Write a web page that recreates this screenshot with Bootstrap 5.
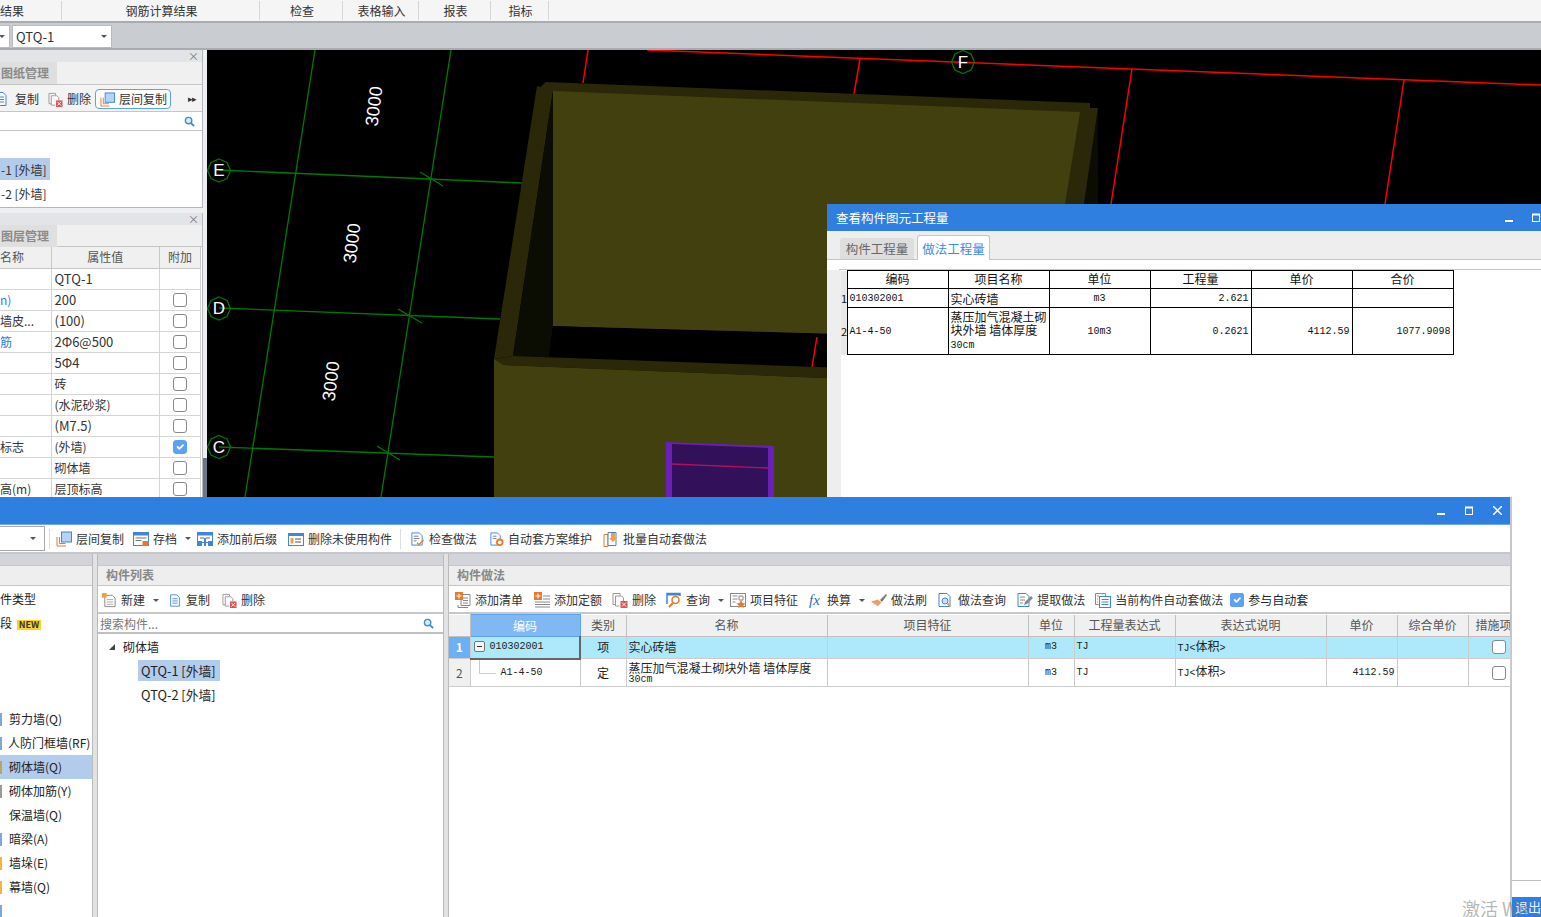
<!DOCTYPE html>
<html lang="zh-CN">
<head>
<meta charset="UTF-8">
<title>查看构件图元工程量</title>
<link href="https://cdn.jsdelivr.net/npm/bootstrap@5.3.0/dist/css/bootstrap.min.css" rel="stylesheet">
<style>
html, body { height: 917px; overflow: hidden; }
body { position: relative; background: #fff; color: #333; font: 12px/16px "Noto Sans CJK SC", "Liberation Sans", sans-serif; }
.ribbon-tabs { height: 23px; background: #f5f5f5; border-bottom: 2px solid #a8abaf; }
.ribbon-tabs > div { height: 19px; margin-top: 1px; padding-left: 2px; line-height: 19px; text-align: center; border-right: 1px solid #d5d5d5; }
.rt-1 { width: 62px; padding-left: 0 !important; text-align: left !important; }
.rt-2 { width: 198px; }
.rt-3 { width: 83px; }
.rt-4 { width: 76px; }
.rt-5 { width: 72px; }
.rt-6 { width: 58px; }
.combo-row { height: 27px; background: #c9ccd0; border-bottom: 2px solid #a8abaf; gap: 2px; padding-top: 2px; }
.combo { height: 23px; background: #fff; border: 1px solid #b9bbbf; font-size: 13px; line-height: 21px; padding-left: 3px; }
.combo-a { width: 10px; border-left: 0; }
.combo-b { width: 100px; }
.caret-dn { display: block; width: 0; height: 0; border: 3px solid transparent; border-top: 3px solid #555; border-bottom: 0; flex: none; }
.main-area { height: 447px; }
.left-col { width: 207px; background: #eeeff1; position: relative; }
.dock { width: 203px; border-right: 1px solid #b5b7ba; background: #fff; }
.dock-a { height: 158px; border-bottom: 1px solid #b5b7ba; }
.dock-b { height: 284px; margin-top: 5px; }
.dock-band { height: 12px; background: #e3e4e7; text-align: right; font-size: 11px; line-height: 12px; padding-right: 3px; color: #777; }
.dock-tabs { height: 23px; background: #f0f0f0; border-bottom: 1px solid #c5c5c5; }
.dock-b .dock-tabs { height: 22px; }
.dock-tab { width: 57px; background: #dfdfdf; color: #8a8a8a; font-weight: 700; line-height: 22px; padding-left: 1px; }
.dock-bar { height: 27px; background: #f3f3f3; border-bottom: 1px solid #c5c5c5; padding-top: 2px; }
.dock-search { height: 19px; border-bottom: 1px solid #c5c5c5; padding-right: 7px; }
.dock-item { height: 22px; line-height: 24px; padding-left: 1px; width: 50px; white-space: nowrap; margin-bottom: 2px; }
.dock-list { padding-top: 27px; }
.is-sel { background: #b3ccec; }
.scroll-stub { position: absolute; right: 0; top: 408px; bottom: 0; width: 4px; background: #6b7785; }
.tool { display: inline-flex; align-items: center; gap: 4px; height: 20px; white-space: nowrap; flex: none; }
.tool svg { flex: none; }
.tool-on { border: 1px solid #5ba2f0; border-radius: 4px; background: #fff; padding: 0 3px 0 4px; margin-left: 4px; }
.tool-txt { margin-left: 6px; }
.tool-end { margin-left: auto; margin-right: 6px; font-size: 9px; letter-spacing: -1px; }
.prop-table { table-layout: fixed; width: 201px; margin: 0; }
.prop-table td, .prop-table th { height: 21px; padding: 0 0 0 3px; border: 1px solid #d5d5d5; border-width: 0 1px 1px 0; font-size: 12px; font-weight: 400; line-height: 20px; vertical-align: middle; white-space: nowrap; overflow: hidden; background: #fff; color: #333; box-shadow: none; }
.prop-table th { background: #f0f0f0; text-align: center; color: #555; padding: 0; border-color: #c8c8c8; }
.prop-table td.lat { font-size: 13px; }
.pc-1 { width: 51px; }
.pc-3 { width: 41px; }
.prop-table td.prop-link { color: #2d7ee0; }
.chk { width: 14px; height: 14px; margin: 0 0 0 10px !important; border: 1px solid #888; border-radius: 3px; display: block; float: none; }
.chk:checked { background-color: #5ba2f5; border-color: #5ba2f5; }
.canvas-wrap { flex: 1; background: #000; overflow: hidden; }
.canvas-wrap svg { display: block; }
.cad-txt { font-family: "Liberation Sans", sans-serif; fill: #fff; }
.win-title { background: #2e7fe0; color: #fff; flex: none; }
.win-qty { position: absolute; left: 827px; top: 204px; width: 741px; height: 713px; background: #fff; z-index: 2; }
.win-qty .win-title { height: 27px; padding-left: 9px; font-size: 12.5px; line-height: 27px; }
.win-btns { margin-left: auto; gap: 18px; }
.win-btns svg { display: block; }
.qty-tabs { height: 29px; background: #eee; padding-left: 13px; border-bottom: 1px solid #c5c5c5; align-items: flex-end; flex: none; }
.qty-tab { height: 21px; width: 74px; background: #dedede; color: #666; text-align: center; font-size: 12.5px; line-height: 21px; border-radius: 3px 3px 0 0; }
.qty-tab-on { height: 25px; width: 73px; margin-left: 3px; margin-bottom: -1px; background: #fff; color: #3b8be8; border: 1px solid #c5c5c5; border-bottom: 0; line-height: 25px; }
.qty-strip { height: 10px; background: #fff; border-bottom: 1px solid #c5c5c5; margin-left: 12px; flex: none; }
.qty-body { flex: 1; border-left: 14px solid #eee; background: #fff; }
.qty-table { table-layout: fixed; width: 612px; margin: 0; border-collapse: collapse; }
.qty-table td, .qty-table th { padding: 0 2px; border: 1px solid #000; font-size: 12px; font-weight: 400; line-height: 13px; vertical-align: middle; color: #111; background: #fff; box-shadow: none; overflow: hidden; }
.qty-table th { height: 18px; padding-bottom: 2px; text-align: center; line-height: 15px; }
.qty-table tbody tr:first-child td { height: 19px; }
.qty-table tbody tr:last-child td { height: 47px; }
.qty-table td.rh, .qty-table th.rh { padding: 0; background: #e8e8e8; border: 0; border-right: 1px solid #000; font-size: 11px; }
.qt-1 { width: 6px; }
.qc { width: 101px; }
.mono, .qty-table td.mono, .grid-table td.mono { font-family: "Liberation Mono", monospace; font-size: 10px; }
.mono .zh { font-family: "Noto Sans CJK SC", sans-serif; font-size: 12px; }
.qty-foot { height: 17px; border-top: 1px solid #bdbdbd; flex: none; }
.qty-exit { height: 20px; margin-left: 685px; background: #2e7fe0; color: #eaf2fc; padding-left: 3px; line-height: 20px; font-size: 13px; flex: none; }
.watermark { position: absolute; left: 1462px; top: 896px; z-index: 5; color: rgba(120,120,120,.55); font-size: 18px; line-height: 24px; white-space: nowrap; }
.win-comp { position: absolute; left: 0; top: 497px; width: 1512px; height: 420px; background: #d2d4d9; border-right: 2px solid #c5c7cb; z-index: 3; }
.win-comp .win-title { height: 28px; border-bottom: 1px solid #6ea8ea; }
.win-comp .win-btns { gap: 19px; padding-right: 8px; }
.comp-bar { height: 29px; background: #fff; border-bottom: 2px solid #c5c7cb; flex: none; }
.comp-combo { width: 45px; height: 25px; border: 1px solid #aaa; border-left: 0; padding-right: 8px; }
.bar-sep { width: 1px; height: 20px; background: #ddd; flex: none; }
.comp-panes { flex: 1; min-height: 0; }
.pane { background: #fff; }
.pane-types { width: 92px; }
.pane-list { width: 345px; }
.pane-grid { flex: 1; min-width: 0; }
.pane-head { height: 32px; padding-top: 11px; background: #d2d4d9; flex: none; }
.pane-head div { height: 21px; background: #eee; border-top: 1px solid #c5c7cb; border-bottom: 1px solid #c5c7cb; color: #888; font-weight: 700; line-height: 18px; padding-left: 8px; }
.split { width: 6px; background: #e2e2e2; border-left: 1px solid #bbb; border-right: 1px solid #bbb; flex: none; }
.type-list { padding-top: 1px; }
.type-row { height: 24px; line-height: 24px; padding-left: 9px; white-space: nowrap; color: #222; position: relative; }
.type-sel { background: #b3ccec; }
.new-tag { background: #ffd21f; color: #333; font-size: 9px; line-height: 10px; font-weight: 700; padding: 0 2px; margin-left: 2px; display: inline-block; }
.type-edge { position: absolute; left: 0; top: 6px; width: 2px; height: 13px; background: #7aa7dc; }
.edge-gray { background: #999; }
.edge-yellow { background: #f3b63a; }
.edge-beige { background: #b8a45e; }
.pane-bar { height: 28px; border-bottom: 2px solid #c5c7cb; padding-top: 2px; flex: none; }
.pane-search { height: 20px; padding: 1px 9px 0 2px; border-bottom: 2px solid #c0c0c0; color: #777; line-height: 17px; flex: none; }
.tree-a { padding: 2px 0 0 11px; line-height: 22px; color: #222; }
.tree-tri { width: 0; height: 0; border-style: solid; border-width: 0 0 6px 6px; border-color: transparent transparent #444 transparent; flex: none; }
.tree-b { margin: 3px 0 0 40px; width: 82px; height: 21px; line-height: 21px; padding-left: 3px; color: #222; white-space: nowrap; font-size: 12.8px; }
.tree-a + .tree-b { margin-top: 2px; }
.grid-table { table-layout: fixed; width: 1061px; margin: 0; border-collapse: collapse; }
.grid-table td, .grid-table th { padding: 0 2px; border: 1px solid #ccc; border-width: 0 1px 1px 0; font-size: 12px; font-weight: 400; line-height: 12px; vertical-align: middle; background: #fff; color: #222; box-shadow: none; overflow: hidden; white-space: nowrap; position: relative; }
.grid-table th { height: 22px; background: #f0f0f0; color: #555; text-align: center; border-color: #c0c0c0; }
.grid-table th.head-on { background: #7fb8f5; color: #fff; border: 1px solid #5ba2f0; }
.grid-table th.head-cut { text-align: left; padding-left: 7px; }
.grid-table td.rh { background: #f0f0f0; text-align: center; color: #555; }
.grid-table .row-a td { height: 22px; padding-bottom: 1px; background: #ade8fb; }
.grid-table .row-a td.rh { background: #6bb0f5; color: #fff; font-weight: 700; }
.grid-table .row-a td.cell-on { border-right: 2px solid #666; border-bottom: 2px solid #666; }
.grid-table .row-b td { height: 28px; }
.grid-table td.wrap { white-space: normal; line-height: 13px; }
.grid-table td.wrap .mono { display: block; line-height: 11px; }
.gc-1 { width: 21px; } .gc-2 { width: 110px; } .gc-3 { width: 46px; } .gc-4 { width: 201px; } .gc-5 { width: 201px; } .gc-6 { width: 46px; }
.gc-7 { width: 101px; } .gc-8 { width: 151px; } .gc-9 { width: 71px; } .gc-10 { width: 71px; } .gc-11 { width: 42px; }
.code-box { display: inline-flex; align-items: center; gap: 5px; margin-left: 1px; height: 12px; vertical-align: top; }
.minus-box { width: 11px; height: 11px; border: 1px solid #777; background: #f5f5f5; border-radius: 2px; position: relative; flex: none; }
.minus-box::after { content: ""; position: absolute; left: 2px; right: 2px; top: 4px; height: 1px; background: #333; }
.grid-table td.code-sub { padding-left: 30px; }
.code-sub::before { content: ""; position: absolute; left: 8px; top: 0; width: 17px; height: 14px; border-left: 1px solid #ccc; border-bottom: 1px solid #ccc; }
.grid-chk { width: 14px; height: 14px; margin: 0 0 0 21px !important; border: 1px solid #888; border-radius: 3px; display: block; }
.grid-head-chk, .grid-head-chk:checked { width: 14px; height: 14px; margin: 0 !important; flex: none; background-color: #5ba2f5; border-color: #5ba2f5; border-radius: 2px; }
.tb-a { margin-left: 6px; }
.tb-b { margin-left: 9px; }
.tb-c { margin-left: 6px; }
.tb-d { margin-left: 11px; }
.tb-s { margin-left: 8px; }
.tb-e { margin-left: 9px; }
.tb-f { margin-left: 12px; }
.tb-h { margin-left: 11px; }
.tb-g { margin-left: 9px; }
.tb-i { margin-left: 12px; }
.tg-start { margin-left: 6px; }
.tg { margin-right: 10px; }
.tg-m { margin-right: 11px; }
.tg-s { margin-right: 6px; }
.tg-c { margin-left: -3px; }
.fx-mark { width: 14px; font: italic 15px "Liberation Serif", serif; color: #2d6fb8; }
</style>
</head>
<body>

<svg width="0" height="0" class="position-absolute">
  <defs>
    <symbol id="i-floor" viewBox="0 0 16 16"><path d="M1 15V6M1 15h9M3.500 12.500V6M3.500 12.500h6" fill="none" stroke="#e8792b" stroke-width="1"/><rect x="5.500" y="1" width="10" height="10" fill="#b5d3f5" stroke="#3f86d8"/></symbol>
    <symbol id="i-copy" viewBox="0 0 16 16"><path d="M3 1.500h7l3 3v10H3z" fill="#fff" stroke="#3f86d8"/><path d="M5 6h6M5 8.500h6M5 11h6" stroke="#3f86d8"/></symbol>
    <symbol id="i-del" viewBox="0 0 16 16"><path d="M1 1.500h7v2M1 1.500v11h3" fill="none" stroke="#999"/><path d="M3.500 4h6l2 2v3M3.500 4v10h4" fill="#fff" stroke="#999"/><rect x="8.500" y="9" width="7" height="7" fill="#d9534f"/><path d="M10 10.500l4 4M14 10.500l-4 4" stroke="#fff"/></symbol>
    <symbol id="i-search" viewBox="0 0 12 12"><circle cx="5" cy="5" r="3.500" fill="#dbeaf7" stroke="#3b8ec9" stroke-width="1.500"/><path d="M7.500 7.500l3.500 3.500" stroke="#3b8ec9" stroke-width="2"/></symbol>
    <symbol id="i-save" viewBox="0 0 16 16"><rect x=".5" y="1.500" width="15" height="13" fill="#fff" stroke="#3f86d8"/><rect x=".5" y="1.500" width="15" height="3" fill="#3f86d8"/><path d="M2.500 7h11M2.500 9.500h6" stroke="#777"/><rect x="9.500" y="10" width="6" height="5" fill="#e8792b"/></symbol>
    <symbol id="i-fix" viewBox="0 0 16 16"><rect x=".5" y="1.500" width="15" height="10" fill="#fff" stroke="#3f86d8"/><rect x=".5" y="1.500" width="15" height="3" fill="#3f86d8"/><path d="M3 7h4M9 7h4" stroke="#666"/><rect x="0" y="10" width="5" height="5" fill="#3f86d8"/><rect x="11" y="10" width="5" height="5" fill="#3f86d8"/><rect x="7" y="7" width="2" height="8" fill="#3f86d8"/></symbol>
    <symbol id="i-unused" viewBox="0 0 16 16"><rect x=".5" y="2.500" width="15" height="12" fill="#fff" stroke="#3f86d8"/><rect x=".5" y="2.500" width="15" height="2.500" fill="#3f86d8"/><path d="M7 8h6M7 11h6" stroke="#555"/><rect x="2.500" y="7" width="3" height="5.500" fill="#f0a040"/></symbol>
    <symbol id="i-check" viewBox="0 0 16 16"><path d="M2 1.500h8l3 3v10H2z" fill="#fff" stroke="#3f86d8"/><path d="M4 5h5M4 7.500h6M4 10h3" stroke="#777"/><path d="M7.500 12l2 2 5-5" fill="none" stroke="#e8792b" stroke-width="1.500"/></symbol>
    <symbol id="i-auto" viewBox="0 0 16 16"><path d="M2 1.500h7l3 3v10H2z" fill="#fff" stroke="#3f86d8"/><path d="M4 5h4M4 7.500h4" stroke="#777"/><circle cx="11.500" cy="11.500" r="3" fill="#fff" stroke="#e8792b" stroke-width="2"/></symbol>
    <symbol id="i-batch" viewBox="0 0 16 16"><path d="M1 3.500h4v12H1z" fill="#fff" stroke="#e8792b"/><path d="M5 1.500h8v13H5z" fill="#fff" stroke="#3f86d8"/><path d="M8 2h4v5h2l-4 4-4-4h2z" fill="#f0a040"/></symbol>
    <symbol id="i-new" viewBox="0 0 16 16"><path d="M3 2.500h8l3 3v9H3z" fill="#fff" stroke="#888"/><path d="M5 7h7M5 9.500h7M5 12h7" stroke="#aaa"/><rect x="0" y="0" width="5" height="5" fill="#f0a040"/></symbol>
    <symbol id="i-addlist" viewBox="0 0 16 16"><path d="M6 2.500h9v11H6z" fill="#fff" stroke="#888"/><path d="M3 13v2.500h10" fill="none" stroke="#888"/><path d="M8 6h5M8 8.500h5M8 11h5" stroke="#888"/><rect x="0" y="0" width="8" height="8" fill="#e8792b"/><path d="M4 1.500v5M1.500 4h5" stroke="#fff"/></symbol>
    <symbol id="i-addquota" viewBox="0 0 16 16"><rect x="0" y="0" width="8" height="8" fill="#e8792b"/><path d="M4 1.500v5M1.500 4h5" stroke="#fff"/><path d="M9 4h7M9 7h7M1 10h15M1 12.500h15M1 15h15" stroke="#888"/></symbol>
    <symbol id="i-query" viewBox="0 0 16 16"><path d="M1 12V1.500h13V4" fill="none" stroke="#3f86d8" stroke-width="1.500"/><path d="M1 2.500h13" stroke="#3f86d8" stroke-width="2"/><circle cx="9.500" cy="8" r="3.500" fill="#fff" stroke="#e8792b" stroke-width="1.500"/><path d="M7 11l-4 4" stroke="#e8792b" stroke-width="2"/></symbol>
    <symbol id="i-feat" viewBox="0 0 16 16"><rect x=".5" y="1.500" width="15" height="13" fill="#fff" stroke="#888"/><path d="M2.500 4h5M2.500 7h5M2.500 10h3M9 4h4v4H9z" fill="none" stroke="#888"/><path d="M11 8l1.500 3 3 .5-2.200 2 .7 2.500-3-1.500-3 1.500.7-2.500-2.200-2 3-.5z" fill="#e8792b"/></symbol>
    <symbol id="i-brush" viewBox="0 0 16 16"><path d="M9 8L15 2l1 1-5 7z" fill="#777"/><path d="M10.500 10.500L7 7.500 0 9.500l2 1.500 1-.3-.5 1.500 2 .5.700-1-.2 1.800 2 .5z" fill="#e8a070"/></symbol>
    <symbol id="i-look" viewBox="0 0 16 16"><path d="M1 1.500h8l3 3v10H1z" fill="#fff" stroke="#3f86d8"/><circle cx="7" cy="9" r="3" fill="#cfe3f7" stroke="#3f86d8"/><path d="M9.500 11.500l3 3" stroke="#f0a040" stroke-width="2"/></symbol>
    <symbol id="i-pick" viewBox="0 0 16 16"><path d="M1 1.500h8l3 3v10H1z" fill="#fff" stroke="#3f86d8"/><path d="M3 5h5M3 8h5M3 11h3" stroke="#888"/><path d="M7 13l1-3 6-6 2 2-6 6z" fill="#888"/></symbol>
    <symbol id="i-current" viewBox="0 0 16 16"><path d="M.5 1.500h10v3M.5 1.500v11h3" fill="none" stroke="#888"/><path d="M2 4h2M2 7h1M2 10h1" stroke="#e8792b"/><rect x="4.500" y="4.500" width="11" height="11" fill="#fff" stroke="#3f86d8"/><path d="M6.500 7.500h7M6.500 10h7M6.500 12.500h7" stroke="#3f86d8"/></symbol>
  </defs>
</svg>

<div class="ribbon-tabs d-flex">
  <div class="rt-1">结果</div>
  <div class="rt-2">钢筋计算结果</div>
  <div class="rt-3">检查</div>
  <div class="rt-4">表格输入</div>
  <div class="rt-5">报表</div>
  <div class="rt-6">指标</div>
</div>
<div class="combo-row d-flex">
  <div class="combo combo-a d-flex align-items-center justify-content-end pe-1"><span class="caret-dn"></span></div>
  <div class="combo combo-b d-flex align-items-center justify-content-between pe-1"><span>QTQ-1</span><span class="caret-dn"></span></div>
</div>

<div class="main-area d-flex">
  <div class="left-col">
    <div class="dock dock-a d-flex flex-column">
      <div class="dock-band">×</div>
      <div class="dock-tabs"><div class="dock-tab">图纸管理</div></div>
      <div class="dock-bar d-flex align-items-center overflow-hidden">
        <span class="tool"><svg width="9" height="16"><use href="#i-copy" x="-7" width="16" height="16"/></svg></span>
        <span class="tool tool-txt"><span>复制</span></span>
        <span class="tool tb-g"><svg width="15" height="15"><use href="#i-del"/></svg><span>删除</span></span>
        <span class="tool tool-on"><svg width="15" height="15"><use href="#i-floor"/></svg><span>层间复制</span></span>
        <span class="tool-end">▸▸</span>
      </div>
      <div class="dock-search d-flex align-items-center justify-content-end"><svg width="11" height="11"><use href="#i-search"/></svg></div>
      <div class="dock-list">
        <div class="dock-item is-sel">-1 [外墙]</div>
        <div class="dock-item">-2 [外墙]</div>
      </div>
    </div>
    <div class="dock dock-b">
      <div class="dock-band">×</div>
      <div class="dock-tabs"><div class="dock-tab">图层管理</div></div>
      <table class="table prop-table">
        <colgroup><col class="pc-1"><col><col class="pc-3"></colgroup>
        <thead><tr><th class="text-start">名称</th><th>属性值</th><th>附加</th></tr></thead>
        <tbody>
          <tr><td></td><td class="lat">QTQ-1</td><td></td></tr>
          <tr><td class="prop-link ps-0">n)</td><td class="lat">200</td><td><input class="form-check-input chk" type="checkbox"></td></tr>
          <tr><td class="ps-0">墙皮...</td><td class="lat">(100)</td><td><input class="form-check-input chk" type="checkbox"></td></tr>
          <tr><td class="prop-link ps-0">筋</td><td class="lat">2Φ6@500</td><td><input class="form-check-input chk" type="checkbox"></td></tr>
          <tr><td></td><td class="lat">5Φ4</td><td><input class="form-check-input chk" type="checkbox"></td></tr>
          <tr><td></td><td>砖</td><td><input class="form-check-input chk" type="checkbox"></td></tr>
          <tr><td></td><td>(水泥砂浆)</td><td><input class="form-check-input chk" type="checkbox"></td></tr>
          <tr><td></td><td class="lat">(M7.5)</td><td><input class="form-check-input chk" type="checkbox"></td></tr>
          <tr><td class="ps-0">标志</td><td>(外墙)</td><td><input class="form-check-input chk" type="checkbox" checked></td></tr>
          <tr><td></td><td>砌体墙</td><td><input class="form-check-input chk" type="checkbox"></td></tr>
          <tr><td class="ps-0">高(m)</td><td>层顶标高</td><td><input class="form-check-input chk" type="checkbox"></td></tr>
        </tbody>
      </table>
    </div>
    <div class="scroll-stub"></div>
  </div>

  <div class="canvas-wrap">
    <svg width="1334" height="447" viewBox="207 50 1334 447">
      <g stroke="#ff0000" stroke-width="1.500" fill="none">
        <path d="M647 50L1541 85"/>
        <path d="M588 50L583 83M860 59L854 94M1132 69L1111 204M1404 80L1385 204"/>
      </g>
      <g stroke="#007a00" stroke-width="1.300" fill="none">
        <path d="M315 50L245 497M451 50L381 497"/>
        <path d="M219 170L522 183M219 308L500 319M219 447L494 457"/>
        <path d="M420 172L443 186M398 309L422 323M377 446L400 460"/>
        <path d="M963 50.500l8 3.500 3.500 8-3.500 8-8 3.500-8-3.500-3.500-8 3.500-8z"/>
        <path d="M219 159l8 3.500 3.500 8-3.500 8-8 3.500-8-3.500-3.500-8 3.500-8z"/>
        <path d="M219 297l8 3.500 3.500 8-3.500 8-8 3.500-8-3.500-3.500-8 3.500-8z"/>
        <path d="M219 435.500l8 3.500 3.500 8-3.500 8-8 3.500-8-3.500-3.500-8 3.500-8z"/>
      </g>
      <g class="cad-txt" font-size="17" text-anchor="middle">
        <text x="963" y="68">F</text>
        <text x="219" y="176">E</text>
        <text x="219" y="314">D</text>
        <text x="219" y="453">C</text>
      </g>
      <g class="cad-txt" font-size="18" text-anchor="middle">
        <text transform="translate(380 107) rotate(-83)">3000</text>
        <text transform="translate(358 244) rotate(-83)">3000</text>
        <text transform="translate(337 382) rotate(-83)">3000</text>
      </g>
      <polygon points="1098,108 1098,204 1084,204" fill="#0b0c02"/>
      <polygon points="546,82 1090,103 1090,108 1098,108 1084,204 1065,204 1065,340 553,326 553,91 537,90" fill="#2a2808"/>
      <polygon points="537,86 553,91 513,356 494,359" fill="#2a2808"/>
      <polygon points="553,91 553,326 549,357 513,356" fill="#0b0c02"/>
      <polygon points="553,91 1080,112 1065,204 1065,340 553,326" fill="#434010"/>
      <polygon points="553,326 1065,345 1065,378 549,357" fill="#000"/>
      <path d="M817 337L812 367" stroke="#f00" stroke-width="1.500"/>
      <polygon points="494,359 513,356 900,370 900,381 503,365 494,366" fill="#2a2808"/>
      <polygon points="494,359 503,365 900,381 900,497 494,497" fill="#434010"/>
      <polygon points="666,442 774,446 774,497 666,497" fill="#6a1fb5"/>
      <polygon points="672,444 768,448 768,497 672,497" fill="#33115a"/>
      <path d="M672 464L768 468" stroke="#b0125f" stroke-width="1.300"/>
    </svg>
  </div>
</div>

<div class="win-qty d-flex flex-column">
  <div class="win-title d-flex align-items-center">
    <span>查看构件图元工程量</span>
    <span class="win-btns d-flex align-items-center">
      <svg width="9" height="9"><path d="M0 8h8" stroke="#fff" stroke-width="2"/></svg>
      <svg width="9" height="9"><rect x=".5" y="1.500" width="7" height="7" fill="none" stroke="#fff"/><path d="M0 1.500h8" stroke="#fff" stroke-width="2"/></svg>
      <svg width="9" height="9"><path d="M0 0l9 9M9 0l-9 9" stroke="#fff" stroke-width="1.500"/></svg>
    </span>
  </div>
  <div class="qty-tabs d-flex">
    <div class="qty-tab">构件工程量</div>
    <div class="qty-tab qty-tab-on">做法工程量</div>
  </div>
  <div class="qty-strip"></div>
  <div class="qty-body">
    <table class="table qty-table">
      <colgroup><col class="qt-1"><col class="qc"><col class="qc"><col class="qc"><col class="qc"><col class="qc"><col class="qc"></colgroup>
      <thead>
        <tr><th class="rh"></th><th>编码</th><th>项目名称</th><th>单位</th><th>工程量</th><th>单价</th><th>合价</th></tr>
      </thead>
      <tbody>
        <tr><td class="rh text-center">1</td><td class="mono">010302001</td><td>实心砖墙</td><td class="mono text-center">m3</td><td class="mono text-end">2.621</td><td></td><td></td></tr>
        <tr><td class="rh text-center">2</td><td class="mono">A1-4-50</td><td>蒸压加气混凝土砌块外墙 墙体厚度<br><span class="mono">30cm</span></td><td class="mono text-center">10m3</td><td class="mono text-end">0.2621</td><td class="mono text-end">4112.59</td><td class="mono text-end">1077.9098</td></tr>
      </tbody>
    </table>
  </div>
  <div class="qty-foot"></div>
  <div class="qty-exit">退出</div>
</div>

<div class="win-comp d-flex flex-column">
  <div class="win-title d-flex align-items-center">
    <span class="win-btns d-flex align-items-center">
      <svg width="9" height="9"><path d="M0 8h8" stroke="#fff" stroke-width="2"/></svg>
      <svg width="9" height="9"><rect x=".5" y="1.500" width="7" height="7" fill="none" stroke="#fff"/><path d="M0 1.500h8" stroke="#fff" stroke-width="2"/></svg>
      <svg width="9" height="9"><path d="M0 0l9 9M9 0l-9 9" stroke="#fff" stroke-width="1.500"/></svg>
    </span>
  </div>
  <div class="comp-bar d-flex align-items-center">
    <div class="comp-combo d-flex align-items-center justify-content-end"><span class="caret-dn"></span></div>
    <span class="bar-sep ms-1"></span>
    <span class="tool tb-a"><svg width="16" height="16"><use href="#i-floor"/></svg><span>层间复制</span></span>
    <span class="tool tb-b"><svg width="16" height="16"><use href="#i-save"/></svg><span>存档</span><span class="caret-dn ms-1"></span></span>
    <span class="tool tb-c"><svg width="16" height="16"><use href="#i-fix"/></svg><span>添加前后缀</span></span>
    <span class="tool tb-d"><svg width="16" height="16"><use href="#i-unused"/></svg><span>删除未使用构件</span></span>
    <span class="bar-sep tb-s"></span>
    <span class="tool tb-e"><svg width="15" height="16"><use href="#i-check"/></svg><span>检查做法</span></span>
    <span class="tool tb-f"><svg width="15" height="16"><use href="#i-auto"/></svg><span>自动套方案维护</span></span>
    <span class="tool tb-h"><svg width="16" height="16"><use href="#i-batch"/></svg><span>批量自动套做法</span></span>
  </div>
  <div class="comp-panes d-flex">
    <div class="pane pane-types d-flex flex-column">
      <div class="pane-head"><div></div></div>
      <div class="type-list">
        <div class="type-row ps-0">件类型</div>
        <div class="type-row ps-0">段 <span class="new-tag">NEW</span></div>
        <div class="type-row"></div>
        <div class="type-row"></div>
        <div class="type-row"></div>
        <div class="type-row"><span class="type-edge"></span>剪力墙(Q)</div>
        <div class="type-row ps-2"><span class="type-edge"></span>人防门框墙(RF)</div>
        <div class="type-row type-sel"><span class="type-edge edge-beige"></span>砌体墙(Q)</div>
        <div class="type-row"><span class="type-edge edge-gray"></span>砌体加筋(Y)</div>
        <div class="type-row">保温墙(Q)</div>
        <div class="type-row"><span class="type-edge"></span>暗梁(A)</div>
        <div class="type-row"><span class="type-edge edge-yellow"></span>墙垛(E)</div>
        <div class="type-row"><span class="type-edge edge-yellow"></span>幕墙(Q)</div>
        <div class="type-row"><span class="type-edge"></span></div>
      </div>
    </div>
    <div class="split"></div>
    <div class="pane pane-list d-flex flex-column">
      <div class="pane-head"><div>构件列表</div></div>
      <div class="pane-bar d-flex align-items-center">
        <span class="tool ms-1"><svg width="15" height="15"><use href="#i-new"/></svg><span>新建</span><span class="caret-dn ms-1"></span></span>
        <span class="tool tb-g"><svg width="14" height="15"><use href="#i-copy"/></svg><span>复制</span></span>
        <span class="tool tb-i"><svg width="15" height="15"><use href="#i-del"/></svg><span>删除</span></span>
      </div>
      <div class="pane-search d-flex align-items-center justify-content-between"><span>搜索构件...</span><svg width="11" height="11"><use href="#i-search"/></svg></div>
      <div class="tree-a d-flex align-items-center gap-2"><span class="tree-tri"></span><span>砌体墙</span></div>
      <div class="tree-b is-sel">QTQ-1 [外墙]</div>
      <div class="tree-b">QTQ-2 [外墙]</div>
    </div>
    <div class="split"></div>
    <div class="pane pane-grid d-flex flex-column">
      <div class="pane-head"><div>构件做法</div></div>
      <div class="pane-bar d-flex align-items-center">
        <span class="tool tg-start tg-m"><svg width="16" height="16"><use href="#i-addlist"/></svg><span>添加清单</span></span>
        <span class="tool tg"><svg width="16" height="16"><use href="#i-addquota"/></svg><span>添加定额</span></span>
        <span class="tool tg"><svg width="16" height="16"><use href="#i-del"/></svg><span>删除</span></span>
        <span class="tool tg-s"><svg width="16" height="16"><use href="#i-query"/></svg><span>查询</span><span class="caret-dn ms-1"></span></span>
        <span class="tool tg-m"><svg width="16" height="16"><use href="#i-feat"/></svg><span>项目特征</span></span>
        <span class="tool tg-s"><span class="fx-mark">fx</span><span>换算</span><span class="caret-dn ms-1"></span></span>
        <span class="tool tg-m"><svg width="16" height="16"><use href="#i-brush"/></svg><span>做法刷</span></span>
        <span class="tool tg-m"><svg width="16" height="16"><use href="#i-look"/></svg><span>做法查询</span></span>
        <span class="tool tg"><svg width="16" height="16"><use href="#i-pick"/></svg><span>提取做法</span></span>
        <span class="tool tg"><svg width="16" height="16"><use href="#i-current"/></svg><span>当前构件自动套做法</span></span>
        <span class="tool tg-c"><input class="form-check-input grid-head-chk" type="checkbox" checked><span class="text-dark">参与自动套</span></span>
      </div>
      <table class="table grid-table">
        <colgroup><col class="gc-1"><col class="gc-2"><col class="gc-3"><col class="gc-4"><col class="gc-5"><col class="gc-6"><col class="gc-7"><col class="gc-8"><col class="gc-9"><col class="gc-10"><col class="gc-11"></colgroup>
        <thead>
          <tr><th></th><th class="head-on">编码</th><th>类别</th><th>名称</th><th>项目特征</th><th>单位</th><th>工程量表达式</th><th>表达式说明</th><th>单价</th><th>综合单价</th><th class="head-cut">措施项</th></tr>
        </thead>
        <tbody>
          <tr class="row-a"><td class="rh">1</td><td class="cell-on"><span class="code-box"><span class="minus-box"></span><span class="mono">010302001</span></span></td><td class="text-center">项</td><td>实心砖墙</td><td></td><td class="mono text-center">m3</td><td class="mono">TJ</td><td class="mono">TJ&lt;<span class="zh">体积</span>&gt;</td><td></td><td></td><td><input class="form-check-input grid-chk" type="checkbox"></td></tr>
          <tr class="row-b"><td class="rh">2</td><td class="mono code-sub">A1-4-50</td><td class="text-center">定</td><td class="wrap">蒸压加气混凝土砌块外墙 墙体厚度<span class="mono">30cm</span></td><td></td><td class="mono text-center">m3</td><td class="mono">TJ</td><td class="mono">TJ&lt;<span class="zh">体积</span>&gt;</td><td class="mono text-end">4112.59</td><td></td><td><input class="form-check-input grid-chk" type="checkbox"></td></tr>
        </tbody>
      </table>
    </div>
  </div>
</div>

<div class="watermark">激活 Wir</div>

</body>
</html>
